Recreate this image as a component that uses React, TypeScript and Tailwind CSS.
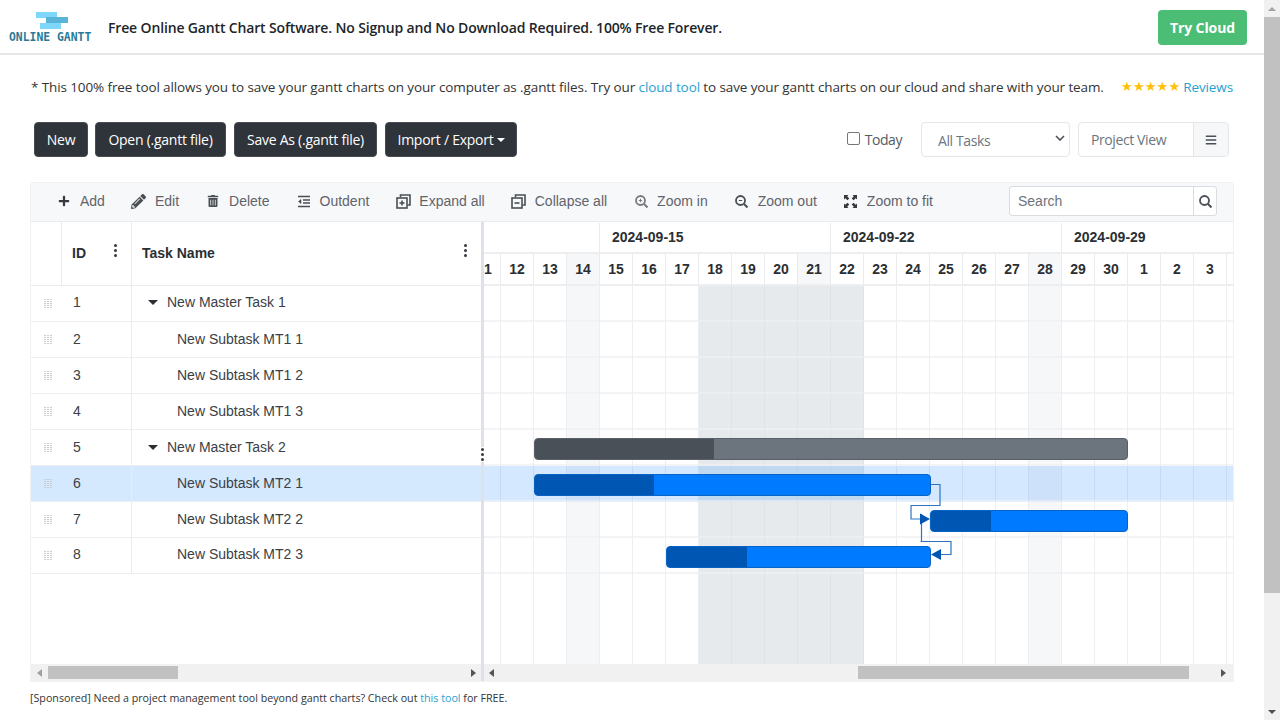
import { FaPencilAlt, FaTrashAlt, FaPlus, FaBars } from 'react-icons/fa'

const segoe = 'font-["Open_Sans",sans-serif]'
const arial = 'font-["Liberation_Sans",Arial,sans-serif]'

const tasks = [
  { id: 1, name: 'New Master Task 1', master: true, lift: true },
  { id: 2, name: 'New Subtask MT1 1' },
  { id: 3, name: 'New Subtask MT1 2' },
  { id: 4, name: 'New Subtask MT1 3' },
  { id: 5, name: 'New Master Task 2', master: true },
  { id: 6, name: 'New Subtask MT2 1', selected: true },
  { id: 7, name: 'New Subtask MT2 2' },
  { id: 8, name: 'New Subtask MT2 3', lift: true },
]

const days = [12, 13, 14, 15, 16, 17, 18, 19, 20, 21, 22, 23, 24, 25, 26, 27, 28, 29, 30, 1, 2, 3]

function OutdentIcon() {
  return (
    <svg width="14" height="13" viewBox="0 0 14 13" fill="none" stroke="currentColor" strokeWidth="1.3">
      <path d="M1 1.500h12M6 5h7M6 8h7M1 11.500h12" />
      <path d="M4 4.500L1.500 6.500 4 8.500z" fill="currentColor" strokeWidth="0.6" />
    </svg>
  )
}

function StackIcon({ plus }: { plus?: boolean }) {
  return (
    <svg width="15" height="15" viewBox="0 0 15 15" fill="none" stroke="currentColor" strokeWidth="1.6">
      <path d="M4.500 3V1h9.500v10h-2.500" />
      <rect x="1" y="4" width="10" height="10" />
      <path d="M3.500 9h5" />
      {plus && <path d="M6 6.500v5" />}
    </svg>
  )
}

function ZoomIcon({ plus, bare }: { plus?: boolean; bare?: boolean }) {
  return (
    <svg width="13" height="13" viewBox="0 0 13 13" fill="none" stroke="currentColor" strokeWidth="1.800">
      <circle cx="5.500" cy="5.500" r="4.500" />
      <path d="M9 9l3.500 3.500" strokeWidth="2" />
      {!bare && <path d="M3.800 5.500h3.400" strokeWidth="1" />}
      {plus && <path d="M5.500 3.800v3.400" strokeWidth="1" />}
    </svg>
  )
}

function FitIcon() {
  return (
    <svg width="13" height="13" viewBox="0 0 13 13" fill="currentColor">
      <path d="M0 0h4.500L3.200 1.300 5.300 3.400 3.400 5.300 1.300 3.200 0 4.500z" />
      <path d="M13 0v4.500l-1.300-1.300-2.100 2.100-1.900-1.900 2.100-2.100L8.500 0z" />
      <path d="M0 13V8.500l1.300 1.300 2.100-2.100 1.900 1.900-2.100 2.100L4.500 13z" />
      <path d="M13 13H8.500l1.300-1.300-2.100-2.100 1.900-1.900 2.100 2.100L13 8.500z" />
    </svg>
  )
}

function ToolItem({ icon, label, className, iconColor = 'text-[#4a4f55]' }: { icon: React.ReactNode; label: string; className: string; iconColor?: string }) {
  return (
    <div className={`flex items-center text-[14px] text-[#5f646b] ${className}`}>
      <span className={`flex w-[16px] justify-center ${iconColor}`}>{icon}</span>
      <span className="ml-[8px]">{label}</span>
    </div>
  )
}

function Kebab({ className = '' }: { className?: string }) {
  return (
    <div className={`flex flex-col gap-[2px] ${className}`}>
      <span className="size-[3px] rounded-full bg-[#343a40]" />
      <span className="size-[3px] rounded-full bg-[#343a40]" />
      <span className="size-[3px] rounded-full bg-[#343a40]" />
    </div>
  )
}

function DragDots() {
  return (
    <div className="grid grid-cols-3 gap-x-[1px] gap-y-[1px]">
      {Array.from({ length: 15 }).map((_, i) => (
        <span key={i} className="h-[1px] w-[2px] bg-[#c9cdd1]" />
      ))}
    </div>
  )
}

function Bar({ className, progress, progressColor, color }: { className: string; progress: string; progressColor: string; color: string }) {
  return (
    <div className={`absolute flex h-[22px] overflow-hidden rounded-[4px] border ${className} ${color}`}>
      <div className={`h-full ${progress} ${progressColor}`} />
    </div>
  )
}

function ScrollArrow({ dir, className = '' }: { dir: 'left' | 'right'; className?: string }) {
  return (
    <svg width="6" height="8" viewBox="0 0 6 8" className={className} fill="currentColor">
      {dir === 'left' ? <path d="M5 0v8L0 4z" /> : <path d="M1 0v8l5-4z" />}
    </svg>
  )
}

export default function App() {
  return (
    <div className={`flex h-[720px] w-[1280px] overflow-hidden bg-white text-[#212529] ${segoe}`}>
      <div className="w-[1264px]">
        <header className="flex h-[55px] items-center border-b-2 border-[#e6e6e6] pt-[2px]">
          <div className="ml-[9px] flex w-[82px] flex-col">
            <svg width="32" height="17" viewBox="0 0 32 17" className="-mt-[2px] ml-[27px]">
              <rect x="0" y="0" width="21" height="6" fill="#7fd6fb" />
              <rect x="10" y="5" width="22" height="6" fill="#59b4d8" />
              <rect x="4" y="11" width="21" height="6" fill="#7fd6fb" />
            </svg>
            <span className='mt-[3px] whitespace-nowrap font-["DejaVu_Sans_Mono",monospace] text-[11.400px] leading-[10px] font-bold text-[#2a7a96]'>ONLINE GANTT</span>
          </div>
          <h1 className="ml-[17px] text-[14px] font-semibold tracking-[-0.15px] text-[#212529]">Free Online Gantt Chart Software. No Signup and No Download Required. 100% Free Forever.</h1>
          <button className="mr-[17px] ml-auto flex h-[35px] w-[89px] items-center justify-center rounded-[4px] bg-[#4cbd74] text-[14px] font-bold tracking-[-0.1px] text-white">Try Cloud</button>
        </header>

        <div className="mx-[31px] mt-[22px] flex h-[20px] items-center justify-between text-[13.500px] tracking-[-0.11px] whitespace-nowrap text-[#333]">
          <p>* This 100% free tool allows you to save your gantt charts on your computer as .gantt files. Try our <span className="text-[#2a9fd0]">cloud tool</span> to save your gantt charts on our cloud and share with your team.</p>
          <div className="flex items-center">
            <span className='font-["DejaVu_Sans",sans-serif] text-[13.200px] tracking-normal text-[#ffc107]'>★★★★★</span>
            <span className="ml-[3px] text-[#2a9fd0]">Reviews</span>
          </div>
        </div>

        <div className="mt-[25px] ml-[34px] flex h-[35px] items-start text-[14px] tracking-[-0.25px] whitespace-nowrap">
          <button className="h-[35px] w-[54px] rounded-[4px] border border-[#484c52] bg-[#2f333a] text-white">New</button>
          <button className="ml-[7px] h-[35px] w-[131px] rounded-[4px] border border-[#484c52] bg-[#2f333a] text-white">Open (.gantt file)</button>
          <button className="ml-[8px] h-[35px] w-[143px] rounded-[4px] border border-[#484c52] bg-[#2f333a] text-white">Save As (.gantt file)</button>
          <button className="ml-[8px] flex h-[35px] w-[132px] items-center justify-center gap-[3px] rounded-[4px] border border-[#484c52] bg-[#2f333a] text-white">
            Import / Export
            <span className="border-x-[4px] border-t-[4px] border-x-transparent border-t-white" />
          </button>
          <label className="ml-[330px] flex h-[35px] w-[55px] items-center text-[14px] tracking-[-0.45px] text-[#555b62]">
            <input type="checkbox" className="size-[13px] -translate-y-[1px] appearance-none rounded-[2px] border border-[#767676] bg-white" />
            <span className="ml-[5px]">Today</span>
          </label>
          <div className="ml-[19px] flex h-[35px] w-[149px] items-center rounded-[4px] border border-[#e4e6e9] pt-[1px] pl-[16px] text-[14px] tracking-[-0.4px] text-[#6c757d]">
            All Tasks
            <svg width="10" height="6" viewBox="0 0 10 6" fill="none" stroke="#4a4f55" strokeWidth="1.600" className="mr-[4px] ml-auto -translate-y-[2px]">
              <path d="M1 1l4 4 4-4" />
            </svg>
          </div>
          <div className="ml-[8px] flex h-[35px] w-[151px] rounded-[4px] border border-[#e4e6e9] text-[14px] tracking-[-0.4px] text-[#6c757d]">
            <span className="flex w-[114px] items-center pl-[12px]">Project View</span>
            <span className="flex flex-1 items-center justify-center rounded-r-[4px] border-l border-[#e4e6e9] bg-[#f6f7f9] text-[#495057]"><FaBars className="size-[12px]" /></span>
          </div>
        </div>

        <section className={`mt-[25px] ml-[30px] w-[1204px] rounded-t-[3px] border border-[#f0f1f3] ${arial}`}>
          <div className="flex h-[38px] items-center bg-[#f7f8fa] pb-[2px]">
            <ToolItem className="ml-[25px]" iconColor="text-[#343a40]" icon={<FaPlus className="size-[12px]" />} label="Add" />
            <ToolItem className="ml-[26px]" icon={<FaPencilAlt className="size-[15px]" />} label="Edit" />
            <ToolItem className="ml-[26px]" icon={<FaTrashAlt className="size-[12px]" />} label="Delete" />
            <ToolItem className="ml-[26px]" icon={<OutdentIcon />} label="Outdent" />
            <ToolItem className="ml-[26px]" icon={<StackIcon plus />} label="Expand all" />
            <ToolItem className="ml-[26px]" icon={<StackIcon />} label="Collapse all" />
            <ToolItem className="ml-[26px]" iconColor="text-[#777b80]" icon={<ZoomIcon plus />} label="Zoom in" />
            <ToolItem className="ml-[26px]" icon={<ZoomIcon />} label="Zoom out" />
            <ToolItem className="ml-[26px]" iconColor="text-[#343a40]" icon={<FitIcon />} label="Zoom to fit" />
            <div className="mr-[16px] ml-auto flex h-[30px] w-[208px] items-center rounded-[3px] border border-[#d9dce0] bg-white text-[14px] text-[#6c757d]">
              <span className="w-[183px] pl-[8px]">Search</span>
              <span className="flex h-full flex-1 items-center justify-center border-l border-[#d9dce0] text-[#495057]"><ZoomIcon bare /></span>
            </div>
          </div>

          <div className="flex h-[443px] border-t border-[#e9ebee]">
            <div className="w-[450px]">
              <div className="flex h-[64px] border-b border-[#e9ebee] text-[14px] font-bold text-[#2b2f33]">
                <div className="w-[31px] border-r border-[#e9ebee]" />
                <div className="flex w-[70px] items-center border-r border-[#e9ebee] pl-[10px]">
                  ID
                  <Kebab className="ml-[28px] -translate-y-[3px]" />
                </div>
                <div className="flex flex-1 items-center pl-[10px]">
                  Task Name
                  <Kebab className="mr-[14px] ml-auto -translate-y-[3px]" />
                </div>
              </div>
              {tasks.map((t) => (
                <div key={t.id} className={`flex h-[36px] border-b border-[#eceef0] text-[14px] text-[#3b4046] ${t.selected ? 'bg-[#d4e8fe]' : ''}`}>
                  <div className="flex w-[31px] items-center justify-center pl-[2px]"><DragDots /></div>
                  <div className={`flex w-[70px] items-center border-r border-[#e9ebee] pl-[11px] ${t.lift ? 'pb-[2px]' : ''}`}>{t.id}</div>
                  <div className={`flex flex-1 items-center ${t.lift ? 'pb-[2px]' : ''}`}>
                    {t.master ? (
                      <>
                        <span className="ml-[16px] border-x-[5px] border-t-[5px] border-x-transparent border-t-[#2b2f33]" />
                        <span className="ml-[9px]">{t.name}</span>
                      </>
                    ) : (
                      <span className="ml-[45px]">{t.name}</span>
                    )}
                  </div>
                </div>
              ))}
            </div>

            <div className="relative w-[3px] bg-[#dee2e8]">
              <Kebab className="absolute top-[225px] left-0 z-10 bg-white py-[1px]" />
            </div>

            <div className="flex-1 overflow-hidden">
              <div className="h-[32px] border-b-2 border-[#eceef0] text-[14px] font-bold text-[#2b2f33]">
                <div className="flex h-full pt-[1px]">
                  <div className="w-[116px] shrink-0 border-r border-[#e9ebee]" />
                  <div className="flex w-[231px] shrink-0 items-center border-r border-[#e9ebee] pl-[12px]">2024-09-15</div>
                  <div className="flex w-[231px] shrink-0 items-center border-r border-[#e9ebee] pl-[12px]">2024-09-22</div>
                  <div className="flex flex-1 items-center pl-[12px] whitespace-nowrap">2024-09-29</div>
                </div>
              </div>
              <div className="flex h-[32px] border-b-2 border-[#eceef0] text-[14px] font-bold text-[#2b2f33]">
                <div className="flex w-[17px] shrink-0 items-center overflow-hidden border-r border-[#e9ebee]">
                  <span>1</span>
                </div>
                {days.map((d, i) => (
                  <div key={i} className={`flex w-[33px] shrink-0 items-center justify-center border-r border-[#e9ebee] ${i === 2 || i === 9 || i === 16 ? 'bg-[#f6f7f9]' : ''}`}>{d}</div>
                ))}
              </div>

              <div className="relative flex h-[378px]">
                <div className="w-[17px] shrink-0 border-r border-[#eceef0]" />
                {days.map((d, i) => (
                  <div key={i} className={`w-[33px] shrink-0 border-r ${i >= 6 && i <= 10 ? 'border-[#e0e3e6] bg-[#e7eaed]' : 'border-[#eceef0]'} ${i === 2 || i === 16 ? 'bg-[#f6f7f9]' : ''}`} />
                ))}

                <div className="absolute top-0 left-0 w-full">
                  {tasks.map((t) => (
                    <div key={t.id} className={`h-[36px] border-b-2 border-[#eff0f2]/70 ${t.selected ? 'bg-[#007bff]/[0.17]' : ''}`} />
                  ))}
                </div>

                <Bar className="top-[152px] left-[50px] w-[594px]" color="border-[#5a6068] bg-[#6c757d]" progress="w-[179px]" progressColor="bg-[#495057]" />
                <Bar className="top-[188px] left-[50px] w-[397px]" color="border-[#0a63c4] bg-[#007bff]" progress="w-[119px]" progressColor="bg-[#0056b3]" />
                <Bar className="top-[224px] left-[446px] w-[198px]" color="border-[#0a63c4] bg-[#007bff]" progress="w-[60px]" progressColor="bg-[#0056b3]" />
                <Bar className="top-[260px] left-[182px] w-[265px]" color="border-[#0a63c4] bg-[#007bff]" progress="w-[80px]" progressColor="bg-[#0056b3]" />

                <svg className="absolute top-0 left-0" width="749" height="378" fill="none">
                  <path d="M447 198.500h9v21h-29v13.500h9" stroke="#2f74c0" strokeWidth="1.200" />
                  <path d="M436.500 255.500h30.500v13h-17M437.500 228v27.500" stroke="#2f74c0" strokeWidth="1.200" />
                  <path d="M436 227.500l10 5.500-10 5.500z" fill="#0056b3" />
                  <path d="M457 263v11l-10-5.500z" fill="#0056b3" />
                </svg>
              </div>
            </div>
          </div>

          <div className="flex h-[17px] bg-[#f1f1f1] text-[#555]">
            <div className="relative flex w-[450px] items-center">
              <ScrollArrow dir="left" className="ml-[6px] text-[#a0a0a0]" />
              <div className="ml-[5px] h-[13px] w-[130px] bg-[#c1c1c1]" />
              <ScrollArrow dir="right" className="mr-[5px] ml-auto" />
            </div>
            <div className="w-[3px] bg-[#dee2e8]" />
            <div className="flex flex-1 items-center">
              <ScrollArrow dir="left" className="ml-[5px]" />
              <div className="ml-[363px] h-[13px] w-[331px] bg-[#c1c1c1]" />
              <ScrollArrow dir="right" className="mr-[7px] ml-auto" />
            </div>
          </div>
        </section>

        <p className="mt-[8px] ml-[30px] text-[10.700px] text-[#333]">[Sponsored] Need a project management tool beyond gantt charts? Check out <span className="text-[#2a9fd0]">this tool</span> for FREE.</p>
      </div>

      <aside className="flex w-[16px] flex-col items-center bg-[#f1f1f1]">
        <div className="flex h-[17px] items-center"><span className="border-x-[4px] border-b-[4px] border-x-transparent border-b-[#a3a3a3]" /></div>
        <div className="h-[576px] w-full bg-[#c1c1c1]" />
        <div className="mt-auto flex h-[17px] items-center"><span className="border-x-[4px] border-t-[4px] border-x-transparent border-t-[#505050]" /></div>
      </aside>
    </div>
  )
}
